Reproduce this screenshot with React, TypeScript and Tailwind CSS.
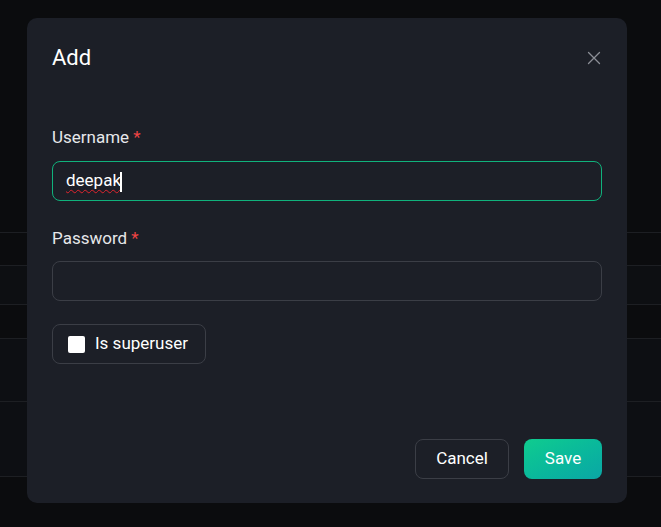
import React from "react";

export default function App() {
  return (
    <div
      className="relative w-[661px] h-[527px] overflow-hidden bg-[#0b0c0e]"
      style={{ fontFamily: "Roboto, 'Noto Sans', sans-serif" }}
    >
      {/* background table rows */}
      <div className="flex flex-col">
        <div className="h-[232px]" />
        <div className="h-[33px] border-t border-[#1d1f23]" />
        <div className="h-[39px] border-t border-[#1d1f23] bg-[#0d0f12]" />
        <div className="h-[34px] border-t border-[#1d1f23]" />
        <div className="h-[63px] border-t border-[#1d1f23] bg-[#0d0f13]" />
        <div className="h-[75px] border-t border-[#1d1f23] bg-[#0d0f13]" />
        <div className="h-[51px] border-t border-[#1d1f23]" />
      </div>

      {/* modal */}
      <div className="absolute left-[27px] top-[18px] w-[600px] h-[485px] rounded-[10px] bg-[#1c1f27] flex flex-col px-[25px] pt-[28px] pb-[24px]">
        <div className="flex items-center justify-between h-[24px]">
          <h2 className="text-[22px] text-white leading-none">Add</h2>
          <svg width="14" height="14" viewBox="0 0 14 14" className="mr-[1px]">
            <path d="M1.5 1.5 L12.5 12.5 M12.5 1.5 L1.5 12.5" stroke="#8b8e96" strokeWidth="1.3" strokeLinecap="round" />
          </svg>
        </div>

        <div className="mt-[57px] flex flex-col">
          <label className="text-[17px] text-[#e6e7ea] leading-[20px]">
            Username <span className="text-[#ef4444]">*</span>
          </label>
          <div className="mt-[14px] h-[40px] rounded-[8px] border border-[#10b27c] flex items-center px-[13px]">
            <span className="text-[17px] text-white relative">
              <span className="underline decoration-wavy decoration-[#e0242e] decoration-[1px] underline-offset-[3px]">deepak</span>
              <span className="inline-block w-[1.5px] h-[20px] bg-white align-middle -ml-[1px]" />
            </span>
          </div>
        </div>

        <div className="mt-[27px] flex flex-col">
          <label className="text-[17px] text-[#e6e7ea] leading-[20px]">
            Password <span className="text-[#ef4444]">*</span>
          </label>
          <div className="mt-[13px] h-[40px] rounded-[8px] border border-[#3b3e46]" />
        </div>

        <div className="mt-[23px]">
          <div className="inline-flex items-center h-[40px] rounded-[8px] border border-[#3b3e46] pl-[15px] pr-[17px] gap-[10px]">
            <span className="w-[17px] h-[17px] rounded-[2px] bg-white" />
            <span className="text-[17px] text-white">Is superuser</span>
          </div>
        </div>

        <div className="mt-auto flex justify-end gap-[15px]">
          <button className="h-[40px] w-[94px] rounded-[8px] border border-[#3b3e46] text-[17px] text-white">
            Cancel
          </button>
          <button className="h-[40px] w-[78px] rounded-[8px] bg-gradient-to-br from-[#10cc8e] to-[#0ba6a5] text-[17px] text-white">
            Save
          </button>
        </div>
      </div>
    </div>
  );
}
